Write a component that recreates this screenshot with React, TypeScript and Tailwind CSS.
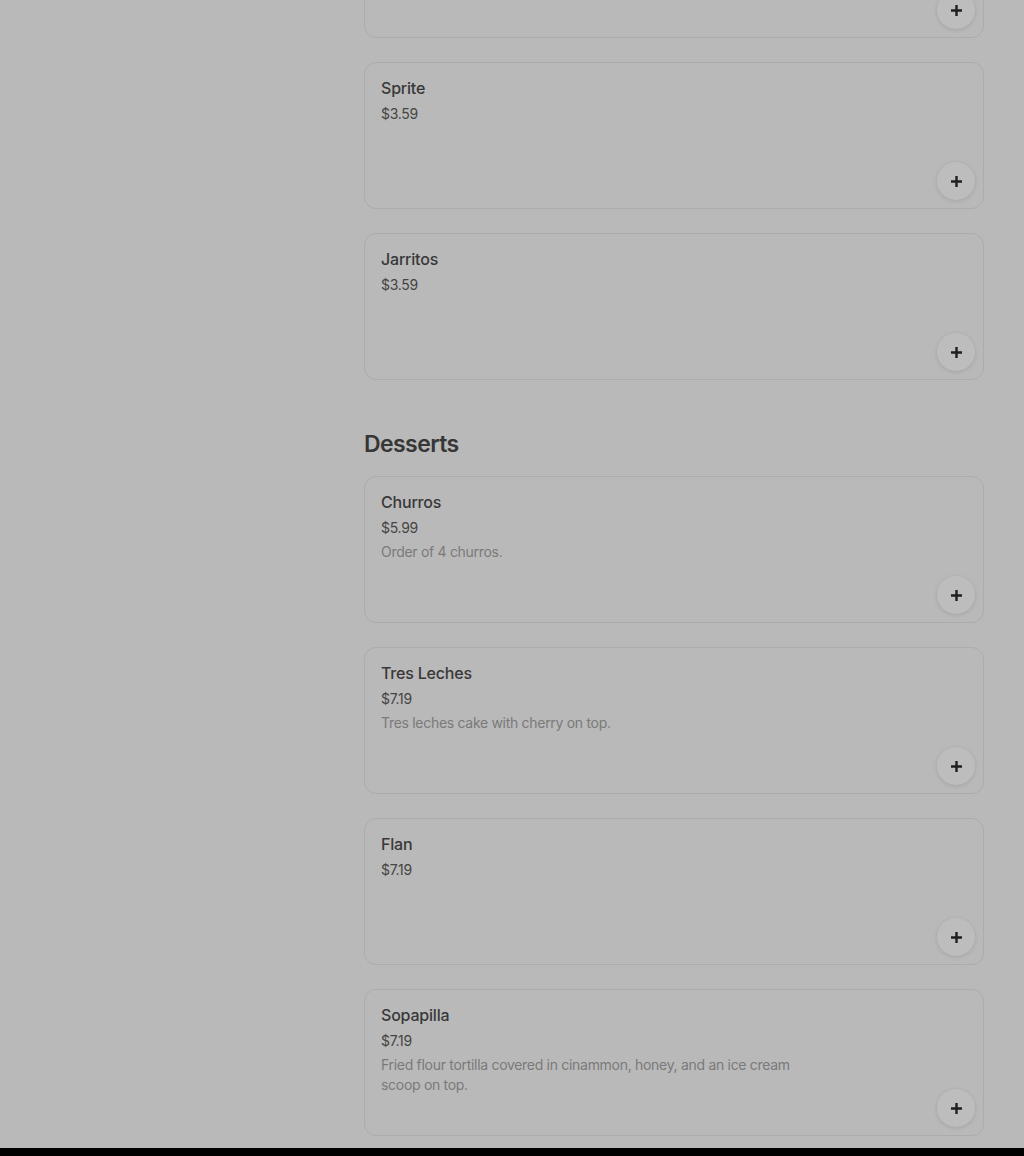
import React from "react";

type Item = { name: string; price: string; desc?: string };

const drinks: Item[] = [
  { name: "Coca-Cola", price: "$3.59" },
  { name: "Sprite", price: "$3.59" },
  { name: "Jarritos", price: "$3.59" },
];

const desserts: Item[] = [
  { name: "Churros", price: "$5.99", desc: "Order of 4 churros." },
  { name: "Tres Leches", price: "$7.19", desc: "Tres leches cake with cherry on top." },
  { name: "Flan", price: "$7.19" },
  {
    name: "Sopapilla",
    price: "$7.19",
    desc: "Fried flour tortilla covered in cinammon, honey, and an ice cream scoop on top.",
  },
];

function PlusButton() {
  return (
    <button className="absolute bottom-[8px] right-[8px] w-[38px] h-[38px] rounded-full bg-[#bdbdbd] shadow-[0_1px_4px_rgba(0,0,0,0.12)] flex items-center justify-center">
      <svg width="13" height="13" viewBox="0 0 13 13" fill="none">
        <path d="M6.5 1v11M1 6.5h11" stroke="#1f1f1f" strokeWidth="2.4" />
      </svg>
    </button>
  );
}

function MenuCard({ item }: { item: Item }) {
  return (
    <div className="relative h-[147px] rounded-xl border border-[#acacac] bg-[#b9b9b9] px-4 pt-[14px]">
      <div className="text-[16px] leading-[22px] font-medium tracking-[-0.2px] text-[#383838]">{item.name}</div>
      <div className="mt-[5px] text-sm leading-5 tracking-[-0.3px] text-[#454545]">{item.price}</div>
      {item.desc && (
        <div className="mt-1 max-w-[440px] text-sm leading-5 tracking-[-0.3px] text-[#7a7a7a]">{item.desc}</div>
      )}
      <PlusButton />
    </div>
  );
}

export default function App() {
  return (
    <div
      className="h-[1156px] flex flex-col bg-[#b9b9b9] overflow-hidden"
      style={{ fontFamily: "Inter, 'Noto Sans', sans-serif" }}
    >
      <div className="flex-1 overflow-hidden">
        <div className="ml-[364px] w-[620px] -mt-[109px]">
          <div className="flex flex-col gap-6">
            {drinks.map((d) => (
              <MenuCard key={d.name} item={d} />
            ))}
          </div>
          <h2 className="mt-12 mb-4 text-[23px] leading-8 font-semibold tracking-tight text-[#363636]">
            Desserts
          </h2>
          <div className="flex flex-col gap-6">
            {desserts.map((d) => (
              <MenuCard key={d.name} item={d} />
            ))}
          </div>
        </div>
      </div>
      <div className="h-2 bg-black" />
    </div>
  );
}
